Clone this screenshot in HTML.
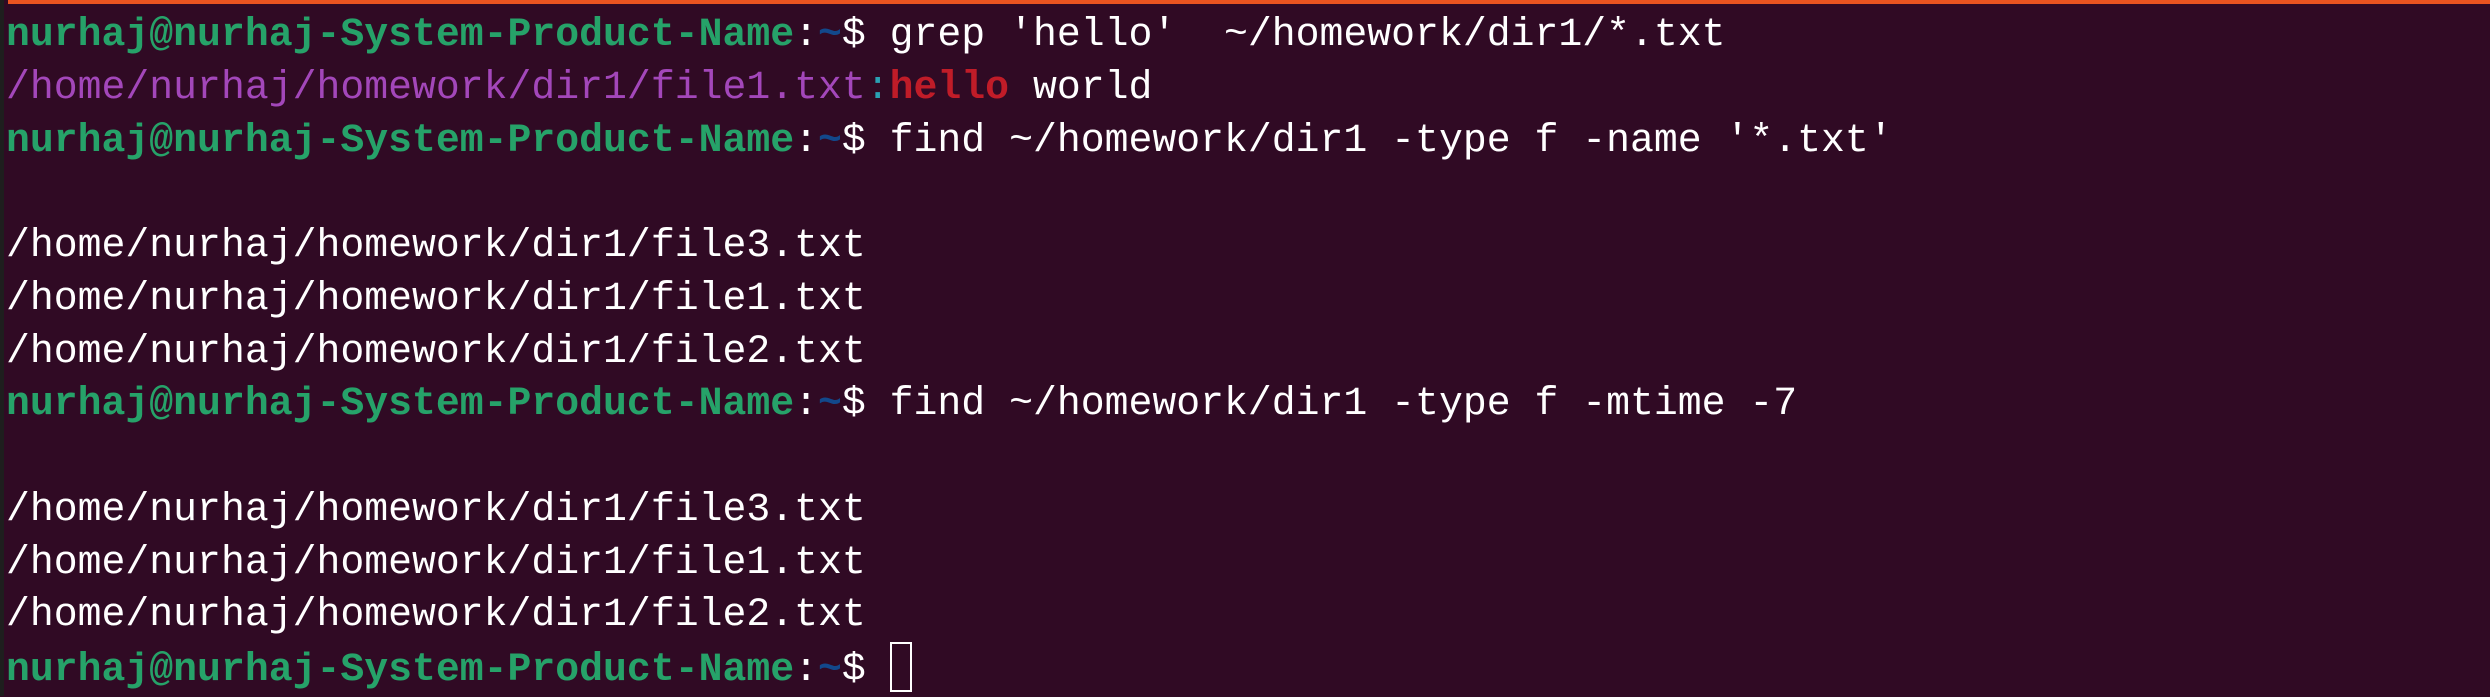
<!DOCTYPE html>
<html><head><meta charset="utf-8"><style>
html,body{margin:0;padding:0;}
body{width:2490px;height:696px;background:#300a24;position:relative;overflow:hidden;}
.bar{position:absolute;left:8px;right:0;top:0;height:4px;background:#e95420;}
.edge{position:absolute;left:0;top:0;width:4px;height:696px;background:#1e1e1e;}
pre{position:absolute;left:6px;top:9px;margin:0;font-family:"Liberation Mono","DejaVu Sans Mono",monospace;font-size:39.8px;line-height:52.75px;color:#ffffff;white-space:pre;}
.g{color:#26a269;font-weight:bold}
.b{color:#12488b;font-weight:bold}
.p{color:#a347ba}
.c{color:#2aa1b3}
.r{color:#c01c28;font-weight:bold}
.cur{display:inline-block;width:22px;height:50px;border:2px solid #fff;box-sizing:border-box;vertical-align:-12px;}
</style></head><body>
<div class="edge"></div><div class="bar"></div>
<pre><span class="g">nurhaj@nurhaj-System-Product-Name</span>:<span class="b">~</span>$ grep 'hello'  ~/homework/dir1/*.txt
<span class="p">/home/nurhaj/homework/dir1/file1.txt</span><span class="c">:</span><span class="r">hello</span> world
<span class="g">nurhaj@nurhaj-System-Product-Name</span>:<span class="b">~</span>$ find ~/homework/dir1 -type f -name '*.txt'

/home/nurhaj/homework/dir1/file3.txt
/home/nurhaj/homework/dir1/file1.txt
/home/nurhaj/homework/dir1/file2.txt
<span class="g">nurhaj@nurhaj-System-Product-Name</span>:<span class="b">~</span>$ find ~/homework/dir1 -type f -mtime -7

/home/nurhaj/homework/dir1/file3.txt
/home/nurhaj/homework/dir1/file1.txt
/home/nurhaj/homework/dir1/file2.txt
<span class="g">nurhaj@nurhaj-System-Product-Name</span>:<span class="b">~</span>$ <span class="cur"></span></pre>
</body></html>
